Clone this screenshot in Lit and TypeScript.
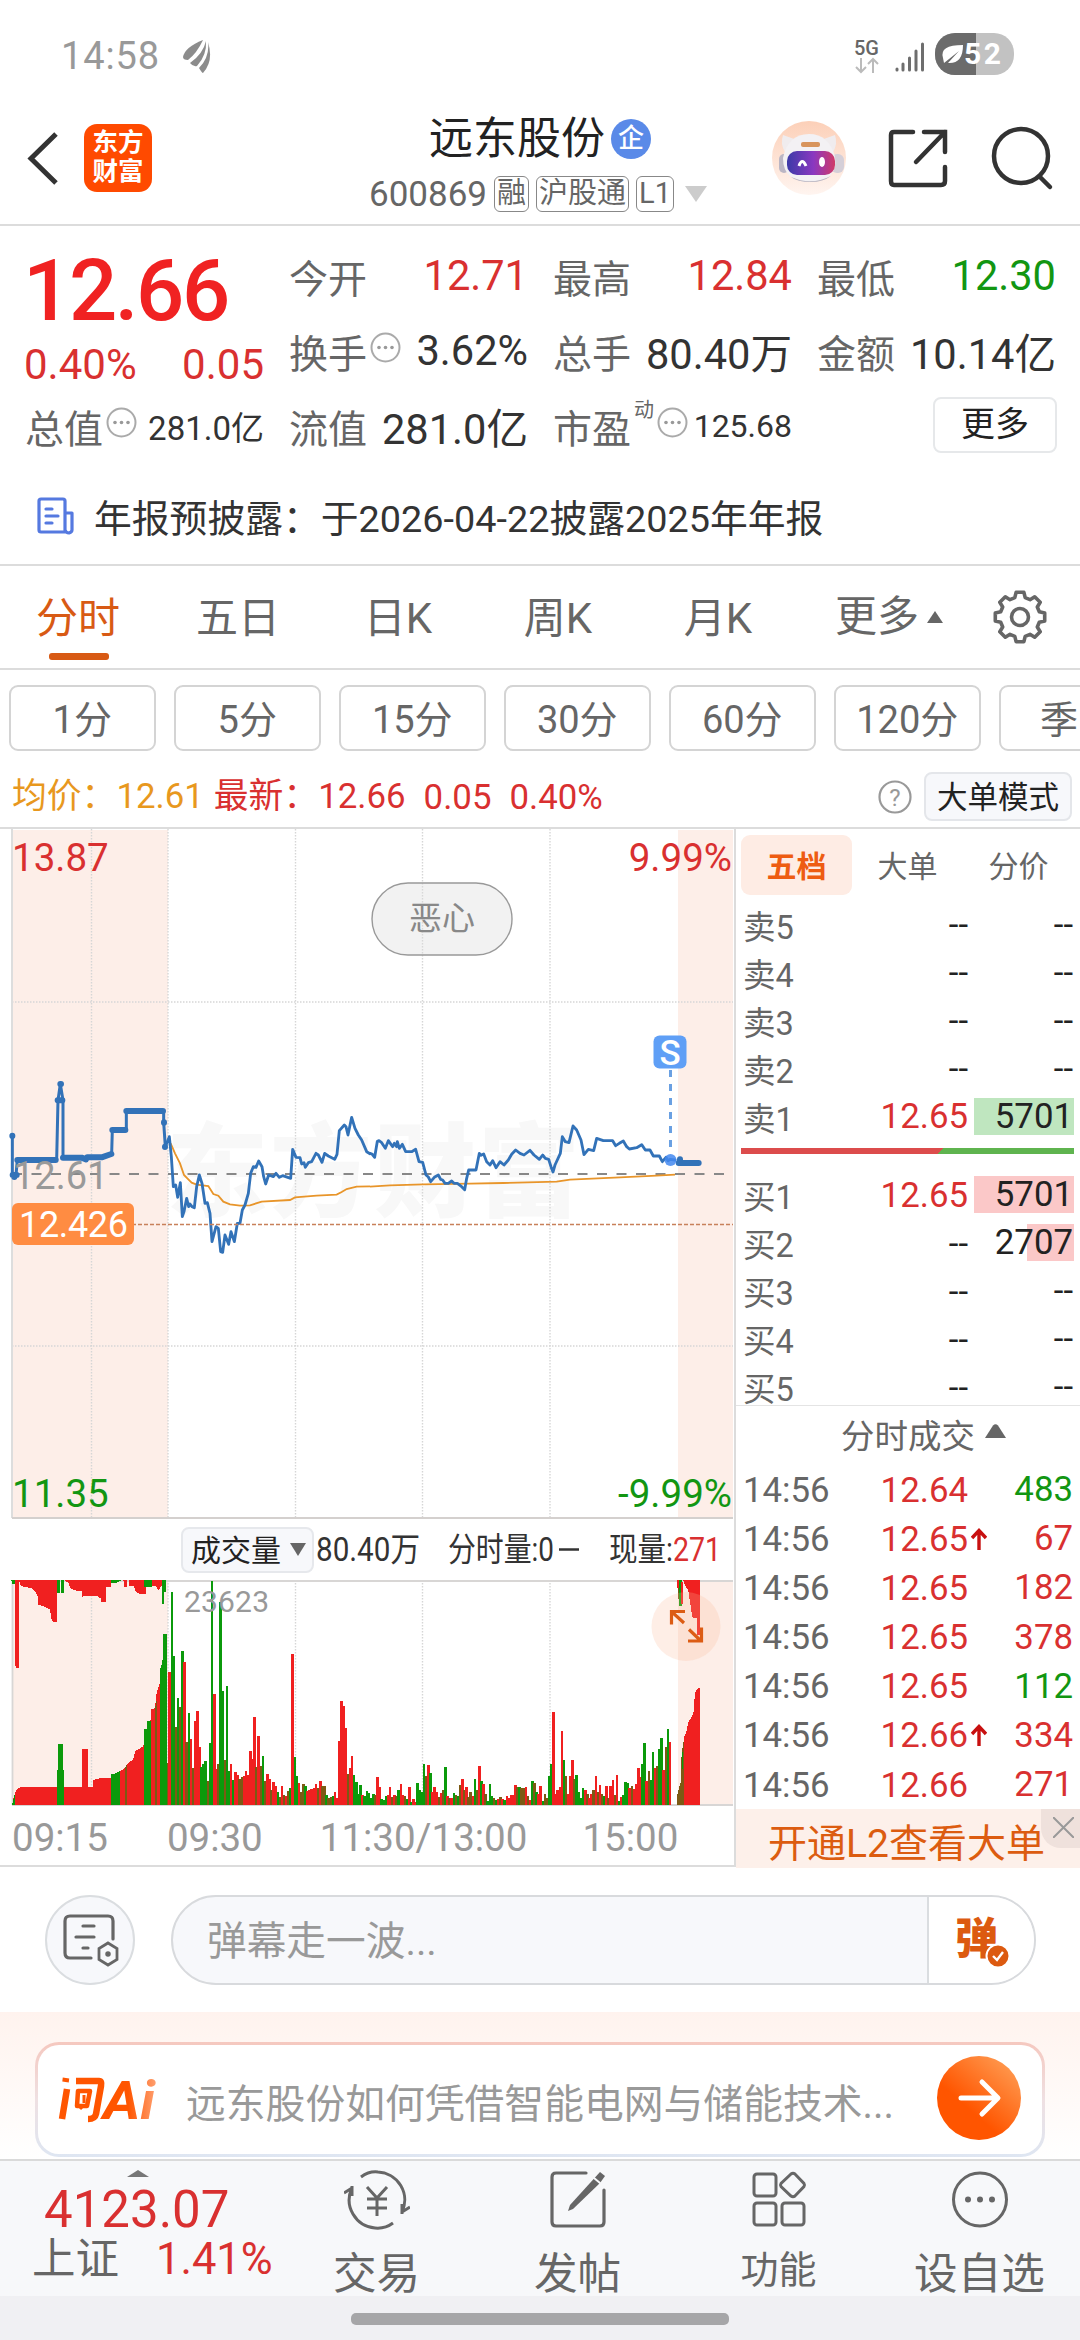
import { LitElement, html, svg, css } from 'lit';
import { customElement } from 'lit/decorators.js';

/* One entry per trading minute: distance from the top of the volume area, then colour (r, g, b = mixed). */
const VOLUME = `583b 308r 68g 262g 474b 388g 413b 247g 280r 519b 432g 510r 597b 457r 425r 534r 594g 586g 577g 636b
521g 37g 375r 600r 584b 100g 367g 572b 351g 605g 586r 632g 610r 618r 629b 625b 620r 606r 618r 546r 570r 444r 594b 500r
592b 561g 637b 614r 630r 664b 639r 650r 670g 684b 652r 677b 680r 667b 656g 255r 565g 622g 641r 670b 645b 652g 667r 664r
661r 656r 645r 656b 637r 652b 650b 677g 687b 684b 680g 669r 686r 516r 396r 411r 477r 616b 597r 561r 618g 640g 676g 649g
677r 680g 667g 672g 688g 675g 678b 625r 655r 690g 693g 682g 678r 654r 684b 677r 681b 664g 646r 678r 680b 690g 655r 698g
690r 698r 642g 664g 668g 585g 622b 588r 612g 670r 655r 670r 684b 672r 662b 595g 681r 688b 686r 671g 678b 682g 648b 630r
664b 655r 684b 670b 680r 631g 662b 591r 636g 644r 674b 695g 646g 680g 687b 692g 690r 684b 690r 694g 682r 686r 678r 678r
647r 655b 655g 657b 657b 655r 682b 694r 637g 642b 668g 676r 650r 695g 676b 688b 620g 585g 430r 676r 662r 655r 487r 572g
622b 674r 620r 573r 629b 618g 670g 686g 657g 663r 674b 686r 674r 662b 620r 670b 648r 676b 681g 650r 686b 650r 633r 678b
617r 697g 684r 677g 638g 641g 656r 651b 659r 645r 596r 624r 585g 523g 636r 607b 633g 549g 598r 591b 541g 507g 602r 535b
479g 519r`.split(/\s+/);

const PRICE_A = '496,260 508,230 514,290 520,380 527,375 533,412 541,368 547,470 552,455 560,415 566,440 570,432 576,440 583,443 590,380 598,345 606,370 615,430 622,428 630,460 636,545 648,500 655,505 662,575 668,577 675,525 686,553 693,515 703,545 712,490 720,490 727,450 735,435 745,400 752,340 760,320 768,322 776,303 786,320 791,350 797,372 806,345 820,350 828,340 838,352 848,347 872,355 878,268 888,292 900,293 905,312 912,308 916,322 925,308 935,305 948,280 955,285 966,307 974,280 985,288 1004,298 1011,283 1018,212 1033,195 1038,200 1044,225 1055,172 1065,205 1075,225 1085,240 1100,275 1110,281';
const PRICE_B = '0,400 6,402 14,412 22,364 27,362 35,368 46,385 55,362 63,373 68,380 73,370 80,380 82,365 88,385 97,373 107,395 125,395 137,388 147,425 158,427 168,465 175,471 182,485 193,472 205,465 212,478 218,480 225,490 235,490 245,483 252,490 262,490 275,500 284,509 290,475 296,450 318,450 328,400 333,406 341,402 350,425 360,435 368,422 378,443 390,425 402,435 415,420 425,403 437,390 450,400 462,405 480,391 492,405 508,418 518,405 526,415 536,418 543,440 549,456 555,435 571,400 577,350 586,365 597,368 609,318 620,330 633,360 642,404 655,388 671,392 680,355 700,362 728,362 737,377 748,370 760,363 770,380 778,387 800,383 815,374 826,390 840,390 850,408 868,408 877,425 888,412 894,422 901,418 915,420';
const AVG_A = '512,250 525,280 540,310 552,345 562,355 575,368 590,374 625,378 640,402 655,407 670,425 690,433 720,437 750,436 785,425 870,420 885,412 950,407 1010,404 1025,396 1040,387 1070,380 1110,379';
const AVG_B = '0,500 60,496 160,493 300,491 400,489 560,485 600,479 750,472 860,467 915,464';

const COLORS: Record<string, string> = { r: '#f02020', g: '#0b9a0b', b: '#7c5a14' };

@customElement('app-root')
export class AppRoot extends LitElement {
  static styles = css`
    :host { display: block; width: 1080px; height: 2340px; overflow: hidden; background: #fff; color: #333;
      font-family: Roboto, "Noto Sans CJK SC", sans-serif; }
    * { box-sizing: border-box; }
    svg { display: block; flex: none; }
    .col { display: flex; flex-direction: column; }
    .red { color: #d93030; } .green { color: #129612; }
    .status { height: 75px; display: flex; align-items: flex-end; padding: 0 66px 0 61px; color: #999; }
    .clock { font-size: 38px; line-height: 40px; letter-spacing: .9px; margin-bottom: -1px; }
    .status .leaf { margin: 0 auto 1px 22px; }
    .net { font-size: 20px; line-height: 18px; font-weight: 500; color: #666; width: 28px; margin-bottom: 1px; }
    .header { height: 151px; border-bottom: 2px solid #dcdcdc; display: flex; position: relative; }
    .back { margin: 54px 0 0 24px; }
    .brand { margin: 49px 0 0 24px; width: 68px; height: 68px; border-radius: 13px; background: #ff4a00; color: #fff;
      font-size: 25.5px; line-height: 29px; font-weight: 700; text-align: center; padding-top: 4px; flex: none; }
    .title { width: 420px; margin-left: 176px; align-items: center; padding-top: 38px; }
    .name { display: flex; align-items: center; gap: 6px; font-size: 44px; line-height: 52px; color: #222; height: 52px; margin-left: 4px;}
    .ent { width: 40px; height: 40px; border-radius: 50%; background: #5a8ae8; color: #fff; font-size: 26px; line-height: 38px;
      text-align: center; font-weight: 500; }
    .code { display: flex; align-items: center; gap: 7px; font-size: 35px; color: #666; height: 40px; margin-top: 9px; }
    .tag { border: 1.5px solid #888; border-radius: 6px; height: 36px; line-height: 33px; font-size: 29px; padding: 0 2px; }
    .h-robot { margin: 45px 0 0 23px; } .h-share { margin: 52px 0 0 40px; } .h-search { margin: 49px 0 0 41px; }
    .quote { height: 238px; padding: 12px 0 0 25px; display: grid; grid-template-columns: repeat(4, 239px); column-gap: 25px;
      grid-template-rows: repeat(3, 75px); }
    .cell { display: flex; align-items: center; justify-content: space-between; font-size: 41.6px; white-space: nowrap; }
    .cell .k { font-size: 39px; color: #666; display: flex; align-items: center; gap: 3px; height: 50px; }
    .cell .small { font-size: 33px; }
    .cell .tiny { font-size: 32px; }
    .sup { font-size: 20px; margin-top: -35px; }
    .main { grid-row: 1 / 3; }
    .big { font-size: 85px; line-height: 90px; font-weight: 500; letter-spacing: -2.4px; color: #f02222; margin: 8px 0 0 -2px; }
    .delta { display: flex; justify-content: space-between; font-size: 42px; line-height: 50px; margin: 4px 0 0 -1px; }
    .more { width: 124px; height: 56px; border: 2px solid #e6e8ea; border-radius: 8px; font-size: 34px; line-height: 50px;
      text-align: center; margin: -2px -1px 0 auto; color: #222; }
    .news { height: 102px; border-bottom: 2px solid #dcdcdc; display: flex; align-items: center; gap: 20px; padding: 7px 0 0 37px;
      font-size: 37.8px; white-space: nowrap; }
    .news span { margin-top: -4px; } .news svg { margin-top: -3px; }
    .tabs { height: 104px; border-bottom: 2px solid #dcdcdc; position: relative; display: flex; align-items: center; font-size: 42px; color: #666; }
    .tab { width: 160px; height: 100px; line-height: 104px; text-align: center; position: relative; left: -2px; }
    .tab.on { color: #d85a14; }
    .tab.on::after { content: ""; position: absolute; left: 51px; bottom: 7px; width: 60px; height: 7px; border-radius: 3px; background: #d85a14; }
    .tab.wide { width: 182px; display: flex; align-items: center; justify-content: center; gap: 8px; }
    .gear { margin-left: 10px; }
    .mins { height: 95px; padding: 15px 0 0 9px; display: flex; gap: 18.5px; overflow: hidden; }
    .min { flex: none; width: 146.5px; height: 66px; border: 2px solid #d4d4d4; border-radius: 9px; text-align: center;
      font-size: 38px; line-height: 67px; color: #666; }
    .min:last-child { width: 120px; }
    .legend { height: 64px; border-bottom: 2px solid #dcdcdc; padding: 0 8px 0 12px; display: flex; align-items: center; font-size: 34.8px; }
    .legend > span { height: 50px; line-height: 50px; display: flex; align-items: baseline; margin-top: 0; }
    .legend .avg { color: #e8981e; margin-right: 10px; }
    .legend .v { margin-left: 18px; margin-top: 1px; }
    .mode { margin-left: 12px; width: 148px; height: 49px; border: 2px solid #e4e6ea; border-radius: 8px; background: #f7f8fb;
      font-size: 30.5px; line-height: 47px; text-align: center; color: #222; white-space: nowrap; }
    .q { margin-left: auto; margin-top: 2px; }
    .body { display: flex; height: 1038px; border-bottom: 2px solid #dcdcdc; }
    .charts { width: 734px; flex: none; }
    .volhead { height: 62px; display: flex; align-items: center; padding-left: 181px; }
    .chip { width: 133px; height: 46px; border: 2px solid #e6e8ec; border-radius: 8px; background: #f7f8fb; display: flex;
      align-items: center; gap: 9px; padding: 0 0 3px 8px; font-size: 30px; color: #222; }
    .axis { height: 58px; font-size: 38.5px; color: #999; display: flex; align-items: center; padding: 3px 0 0 12px; }
    .axis span:nth-child(2) { margin-left: 59px; } .axis span:nth-child(3) { margin-left: 57px; } .axis span:nth-child(4) { margin-left: 55px; }
    .side { width: 346px; border-left: 2px solid #dcdcdc; }
    .stabs { display: flex; padding: 6px 0 0 5px; height: 71px; font-size: 30px; color: #666; flex: none; }
    .stabs div { width: 111px; height: 60px; line-height: 64px; text-align: center; border-radius: 9px; }
    .stabs .on { background: #feece4; color: #ee5c12; font-weight: 700; }
    .row { height: 48.1px; display: flex; align-items: center; padding: 0 6px 0 7px; font-size: 34.8px; color: #666; flex: none; }
    .row .l { width: 104px; } .row .l.zh { font-size: 32.5px; }
    .row .p { width: 121px; text-align: right; } .row .dash { color: #222; }
    .row .n { flex: 1; margin-left: 6px; height: 37px; line-height: 37px; text-align: right; color: #222; padding-right: 1px; margin-top: 0; }
    .row .n.g { background: #bfe6bf; } .row .n.r { background: #fbc8c8; }
    .row .n.half { background: linear-gradient(to right, transparent 53%, #fbc8c8 53%); }
    .ratio { height: 6px; margin: 8px 6px 16px 5px; background: linear-gradient(135deg, #dc4c4c 0 143px, #5fb44f 143px); flex: none; }
    .dealhead { height: 60px; margin-top: -6px; flex: none; border-top: 1.5px solid #e4e4e4; display: flex; align-items: center; justify-content: center; gap: 10px;
      font-size: 33.5px; color: #666; padding: 0 0 4px 31px; }
    .deal { height: 49.2px; } .deal .n { background: none; }
    .deal .p { display: flex; justify-content: flex-end; } .deal .p svg { margin: 9px -19px 0 3px; }
    .deal .n.up { color: #d93030; } .deal .n.dn { color: #129612; }
    .promo { flex: 1; background: #fdf0ea; color: #dc5c10; font-size: 39px; display: flex; align-items: center; padding: 3px 0 0 32px;
      position: relative; white-space: nowrap; }
    .close { position: absolute; right: 0; top: 0; width: 39px; height: 39px; background: #efe1dc; border-bottom-left-radius: 20px;
      display: flex; align-items: center; justify-content: flex-end; padding: 0 6px 2px 0; }
    .chat { height: 145px; padding: 28px 45px 0; display: flex; gap: 36px; }
    .round { width: 90px; height: 90px; border-radius: 50%; border: 2px solid #dadde0; background: #f7f8fb; display: flex;
      align-items: center; justify-content: center; flex: none; }
    .input { width: 865px; height: 90px; border: 2px solid #d8dadd; border-radius: 45px; background: #f7f8fb; display: flex; overflow: hidden;
      font-size: 39.7px; line-height: 90px; color: #999; padding-left: 34px; flex: none; }
    .send { margin-left: auto; width: 107px; border-left: 2px solid #dadde0; background: #fff; padding: 18px 0 0 26px; }
    .ai { height: 147px; padding: 30px 0 0 35px; background: linear-gradient(#fff3ee, #fffaf8 60%, #fff); }
    .aibox { width: 1010px; height: 115px; border-radius: 24px; padding: 3px; background: linear-gradient(#f5c8bf, #efe0e2 50%, #dee6f2); }
    .aiin { height: 109px; border-radius: 21px; background: #fff; display: flex; align-items: center; font-size: 39.8px; color: #999;
      padding: 0 21px 3px 20px; white-space: nowrap; }
    .aiin span { margin: 5px auto 0 26px; }
    .nav { height: 137px; border-top: 2px solid #dadada; background: #f7f8fa; display: flex; color: #666; }
    .index { width: 276px; padding: 9px 0 0 32px; flex: none; }
    .index svg { margin-left: 95px; }
    .idx { font-size: 51px; line-height: 54px; margin: 6px 0 0 12px; }
    .idr { display: flex; align-items: center; font-size: 43.5px; line-height: 50px; margin-top: -2px; gap: 37px; }
    .item { width: 201px; align-items: center; padding-top: 7px; font-size: 43.6px; line-height: 56px; }
    .item svg { height: 64px; margin-bottom: 15px; }
    .item.sm { font-size: 38px; line-height: 48px; } .item.sm svg { margin-bottom: 14px; }
    .home { height: 44px; background: #f0f0f3; padding: 17px 351px 0; }
    .home div { height: 12px; border-radius: 5px; background: #a6a6a8; }
  `;

  private dots() {
    return html`<svg width="31" height="31" viewBox="0 0 31 31" style="margin-top:-7px"><circle cx="15.5" cy="15.5" r="14" fill="none" stroke="#aaa" stroke-width="2"/>
      <g fill="#999"><circle cx="9" cy="15.5" r="1.8"/><circle cx="15.5" cy="15.5" r="1.8"/><circle cx="22" cy="15.5" r="1.8"/></g></svg>`;
  }

  private cell(k: unknown, v: string, cls = '') {
    return html`<div class="cell"><div class="k">${k}</div><span class=${cls}>${v}</span></div>`;
  }

  private statusBar() {
    return html`<div class="status">
      <div class="clock">14:58</div>
      <svg class="leaf" width="30" height="34" viewBox="0 0 30 34" fill="#8c8c8c"><path d="M21 0Q3 7 1 17Q1 20 6 20Q15 13 21 0Z"/><path d="M24 1Q21 14 8 23Q11 27 15 26Q25 15 24 1Z"/><path d="M26 2Q28 17 17 28Q20 33 21 33Q32 21 26 2Z"/></svg>
      <div class="net">5G<svg width="26" height="17" viewBox="0 0 26 17" fill="none" stroke="#bbb" stroke-width="2"><path d="M7 1V15M2 10L7 15L12 10M19 16V2M14 7L19 2L24 7"/></svg></div>
      <svg style="margin:0 10px 3px 13px" width="30" height="30" viewBox="0 0 30 30" stroke="#6e6e6e" stroke-width="3" stroke-linecap="round"><path d="M2 27V28M8 22V28M14.5 16V28M21 9V28M27.5 2V28"/></svg>
      <svg width="79" height="42" viewBox="0 0 79 42"><clipPath id="b"><rect width="79" height="42" rx="20"/></clipPath><g clip-path="url(#b)"><rect width="79" height="42" fill="#c2c2c2"/><rect width="41" height="42" fill="#6b6b6b"/></g>
        <path d="M8 25Q4 12 28 12Q28 31 13 30L24 18L9 30Z" fill="#fff"/><text x="29" y="31" font-size="30" font-weight="700" fill="#fff" textLength="37">52</text></svg>
    </div>`;
  }

  private header() {
    return html`<div class="header">
      <svg class="back" width="36" height="60" viewBox="0 0 36 60" fill="none" stroke="#333" stroke-width="5"><path d="M32 5L7 29.5L32 54"/></svg>
      <div class="brand">东方<br>财富</div>
      <div class="title col">
        <div class="name">远东股份<div class="ent">企</div></div>
        <div class="code">600869<span class="tag">融</span><span class="tag">沪股通</span><span class="tag">L1</span>
          <svg width="22" height="16" viewBox="0 0 22 16" style="margin-left:4px"><path d="M0 0H22L11 16Z" fill="#ccc"/></svg></div>
      </div>
      <svg class="h-robot" width="76" height="76" viewBox="0 0 76 76"><defs><linearGradient id="rb" x1="0" y1="0" x2="0" y2="1"><stop offset="0" stop-color="#fcd0b8"/><stop offset="1" stop-color="#fff5f0"/></linearGradient>
        <linearGradient id="vz"><stop offset="0" stop-color="#3c3aa8"/><stop offset=".55" stop-color="#8a38c0"/><stop offset="1" stop-color="#d03a68"/></linearGradient></defs>
        <circle cx="38" cy="38" r="37" fill="url(#rb)"/><path d="M12 15Q9 24 14 32L26 20ZM64 15Q67 24 62 32L50 20Z" fill="#f0ecee"/><rect x="8" y="34" width="10" height="19" rx="5" fill="#bbb6c4"/><rect x="60" y="34" width="13" height="19" rx="6" fill="#d5cfd8"/>
        <path d="M38 14Q58 14 64 37Q67 61 40 62Q12 62 12 38Q17 14 38 14Z" fill="#f3f1f4"/><path d="M20 57Q40 66 60 56Q52 62 40 62Q26 62 20 57Z" fill="#b9b4bf"/><rect x="30" y="22" width="19" height="5" rx="2" fill="#d8945c"/>
        <rect x="16" y="31" width="48" height="24" rx="10" fill="url(#vz)"/><path d="M28 46Q31 37 35 46" fill="none" stroke="#fff" stroke-width="3"/><ellipse cx="51" cy="42" rx="3" ry="5" fill="#fff"/></svg>
      <svg class="h-share" width="62" height="62" viewBox="0 0 62 62" fill="none" stroke="#333" stroke-width="4.5" stroke-linecap="round"><path d="M26 5H7Q4 5 4 8V54Q4 58 7 58H54Q58 58 58 54V40M37 5H58V25M58 5L29 35"/></svg>
      <svg class="h-search" width="64" height="68" viewBox="0 0 64 68" fill="none" stroke="#333" stroke-width="4.5" stroke-linecap="round"><circle cx="31" cy="32" r="27"/><path d="M50 53L60 63"/></svg>
    </div>`;
  }

  private quote() {
    return html`<div class="quote">
      <div class="main col"><div class="big">12.66</div><div class="delta red"><span>0.40%</span><span>0.05</span></div></div>
      ${this.cell('今开', '12.71', 'red')}${this.cell('最高', '12.84', 'red')}${this.cell('最低', '12.30', 'green')}
      ${this.cell(html`换手${this.dots()}`, '3.62%')}${this.cell('总手', '80.40万')}${this.cell('金额', '10.14亿')}
      ${this.cell(html`总值${this.dots()}`, '281.0亿', 'small')}${this.cell('流值', '281.0亿')}
      ${this.cell(html`市盈<span class="sup">动</span>${this.dots()}`, '125.68', 'tiny')}
      <div class="cell"><div class="more">更多</div></div>
    </div>
    <div class="news">
      <svg width="37" height="38" viewBox="0 0 37 38" fill="none" stroke="#5579e0" stroke-width="3.2" stroke-linejoin="round" stroke-linecap="round"><path d="M29 35H4Q2 35 2 33V4Q2 2 4 2H26Q28 2 28 4V33Q29 36 32 36Q35 35 35 33V16H29M9 12H15M9 19H21M9 26H15"/></svg>
      <span>年报预披露：于2026-04-22披露2025年年报</span></div>`;
  }

  private tabs() {
    const teeth = Array.from({ length: 8 }, (_, i) => {
      const at = (r: number, d: number) => { const a = ((i * 45 + d - 90) * Math.PI) / 180; return `${(28 + r * Math.cos(a)).toFixed(1)},${(28 + r * Math.sin(a)).toFixed(1)}`; };
      return [at(25, -9), at(25, 9), at(20, 15), at(20, 30)].join(' ');
    }).join(' ');
    return html`<div class="tabs">
      <div class="tab on">分时</div><div class="tab">五日</div><div class="tab">日K</div><div class="tab">周K</div><div class="tab">月K</div>
      <div class="tab wide">更多<svg width="16" height="12" viewBox="0 0 16 12"><path d="M0 12H16L8 0Z" fill="#666"/></svg></div>
      <svg class="gear" width="56" height="56" viewBox="0 0 56 56" fill="none" stroke="#666" stroke-width="3.6" stroke-linejoin="round"><polygon points=${teeth}/><circle cx="28" cy="28" r="8.5"/></svg>
    </div>
    <div class="mins">${['1分', '5分', '15分', '30分', '60分', '120分', '季'].map((m) => html`<div class="min">${m}</div>`)}</div>
    <div class="legend"><span class="avg">均价：12.61</span><span class="red">最新：12.66</span><span class="v red">0.05</span><span class="v red">0.40%</span>
      <svg class="q" width="34" height="34" viewBox="0 0 34 34"><circle cx="17" cy="17" r="15.5" fill="none" stroke="#999" stroke-width="2.2"/><text x="17" y="25.5" font-size="24" text-anchor="middle" fill="#999">?</text></svg>
      <div class="mode">大单模式</div></div>`;
  }

  private priceChart() {
    const cols = [91.5, 168, 295.5, 422.5, 550];
    return html`<svg width="734" height="690" viewBox="0 0 734 690">
      <rect x="12" y="1" width="156" height="688" fill="#fdeee8"/><rect x="678" y="1" width="55" height="688" fill="#fdeee8"/>
      <text x="166" y="380" font-size="102" font-weight="900" fill="#f8f8f8" textLength="414">东方财富</text>
      <g stroke="#d6d6d6" stroke-width="1.4" stroke-dasharray="1.5 1.5">${cols.map((x) => svg`<path d="M${x} 0V688"/>`)}<path d="M12 173H733M12 517H733"/></g>
      <path d="M12 0V689" stroke="#ddd" stroke-width="2"/><path d="M12 689H733" stroke="#d4d0ce" stroke-width="2"/>
      <path d="M12 345H733" stroke="#888" stroke-width="1.8" stroke-dasharray="10 9.5"/>
      <g fill="none" stroke="#e8952a" stroke-width="5.5"><g transform="translate(0 231) scale(.33333)"><polyline points=${AVG_A}/></g><g transform="translate(370 191) scale(.33333)"><polyline points=${AVG_B}/></g></g>
      <g fill="none" stroke="#3272b8" stroke-width="8.5" stroke-linejoin="round" stroke-linecap="round">
        <g transform="translate(0 231) scale(.33333)"><polyline points=${PRICE_A}/>
          <path stroke-width="9" d="M37 227V345H48L52 300H170L174 121L181 72L189 121V293H245L258 298L262 293H310L335 280L337 210H379V153H491V187L496 260"/>
          <path stroke-width="18" d="M37 227V228M38 345H50M43 350V351M52 300H167M173 121H187M181 72H183M189 293H245L258 298M262 292H305L334 282M337 210H376M379 153H489M492 187V188M495 260V261"/></g>
        <g transform="translate(370 191) scale(.33333)"><polyline points=${PRICE_B}/><path stroke-width="18" d="M926 429H986M930 418V425"/></g>
      </g>
      <path d="M670.5 241V324" stroke="#6aa0e2" stroke-width="3" stroke-dasharray="7 7"/><circle cx="670.5" cy="331" r="6" fill="#4388f0" opacity=".85"/>
      <rect x="653.5" y="206.500" width="33" height="33" rx="6" fill="#5f9ff6"/><text x="670" y="235.500" font-size="35" font-weight="500" fill="#fff" text-anchor="middle">S</text>
      <path d="M12 395.500H733" stroke="#c8805a" stroke-width="1.4" stroke-dasharray="4 2"/>
      <rect x="12" y="374" width="122" height="42" rx="6" fill="#ff8c42"/><text x="19" y="407.500" font-size="36" fill="#fff" textLength="109">12.426</text>
      <text x="13" y="360" font-size="38" fill="#999">12.61</text>
      <g font-size="38.5"><text x="12" y="42" fill="#d93030">13.87</text><text x="732" y="42" text-anchor="end" fill="#d93030">9.99%</text>
        <text x="12" y="677.500" fill="#129612">11.35</text><text x="732" y="677.500" text-anchor="end" fill="#129612">-9.99%</text></g>
      <rect x="372" y="54" width="140" height="72" rx="36" fill="#dcdcdc" fill-opacity=".36" stroke="#999" stroke-width="1.4"/>
      <text x="442" y="101" font-size="33" text-anchor="middle" fill="#888">恶心</text>
    </svg>`;
  }

  private volumeChart() {
    const rect = (x: number, y: number, w: number, y2: number, c: string) => svg`<rect x=${x} y=${y} width=${w} height=${y2 - y} fill=${COLORS[c]}/>`;
    return html`<svg width="734" height="227" viewBox="0 0 734 227">
      <rect x="12" y="1" width="156" height="224" fill="#fdeee8"/><rect x="678" y="1" width="55" height="224" fill="#fdeee8"/>
      <g stroke="#d6d6d6" stroke-width="1.4" stroke-dasharray="1.5 1.500">${[91.5, 168, 295.5, 422.5, 550].map((x) => svg`<path d="M${x} 0V225"/>`)}</g>
      <path d="M12 1H733M12 225H733M12.500 0V225" stroke="#d8d6d5" stroke-width="1.800" fill="none"/>
      <g transform="translate(0 -11) scale(.33333)" shape-rendering="crispEdges">
        ${VOLUME.map((v, i) => rect(499 + i * 6.36, parseInt(v), 7.6, 708, v.slice(-1)))}
        <g fill="#f02020"><path d="M38 708V695L45 672L52 660L65 653L90 655H280V633L300 628L332 627V617L350 612L372 600L380 587L400 570L405 547L430 532L436 500L452 453V422L465 418L470 370L480 340V708Z"/>
          <path d="M45 34H57V297H49L45 285ZM57 34H171V160H160L154 148L150 122L130 112L114 107V82L105 68L95 57L70 54L62 48ZM193 34H333V54H317V100H304L302 88L290 80H262L246 83V66L222 64L212 58L205 42ZM370 34H381V53H373ZM387 34H438V74H418L405 66L402 50H387ZM455 34H486V50L475 63L466 50H455Z"/>
          <path d="M245 541H263V708H245Z"/></g>
        <g fill="#0b9a0b"><path d="M332 708V617L350 612L360 606V708ZM432 708V480H442V455H452V708ZM480 708V300L486 285L490 255V195H500V708ZM170 708V603H174V526H189V603H191V708Z"/>
          <path d="M34 33H45V46H38ZM170 34H179V71H170ZM182 34H191V71H182ZM333 34H365L350 41H333ZM432 34H455V54H432ZM485 34H499V68H493V105H485ZM36 707L44 675V708Z"/></g>
        <g fill="#7c5a14"><path d="M374 708V598L380 587V708ZM465 708V418L470 395V708Z"/></g>
        <g transform="translate(1110 0)"><path fill="#7c5a14" d="M921 708V680L932 640L935 550L943 505V708ZM924 34H930V105H926Z"/><path fill="#0b9a0b" d="M926 34H936V110H926ZM936 550H940V600H936Z"/>
          <path fill="#f02020" d="M942 708V505L950 485L955 460L970 435L975 370L984 357H990V708ZM921 34H926V58H921ZM932 40H940V105H934ZM940 34H990V198H981V148H968L964 125L955 65L945 50Z"/></g>
      </g>
      <text x="184" y="32" font-size="30" fill="#999" textLength="85">23623</text>
      <circle cx="686" cy="46.500" r="34.500" fill="#fbb898" fill-opacity=".24"/>
      <g fill="none" stroke="#dc5c14" stroke-width="3.200"><path d="M671.500 44.500V31.500H685M672 32L684 43M688 61H701.500V47.500M689 49.500L701 61"/></g>
    </svg>`;
  }

  private charts() {
    return html`<div class="charts col">
      ${this.priceChart()}
      <div class="volhead"><div class="chip">成交量<svg width="16" height="13" viewBox="0 0 16 13" style="margin-top:2px"><path d="M0 0H16L8 13Z" fill="#666"/></svg></div>
        <svg width="420" height="46" viewBox="0 0 420 46" font-size="33" fill="#333"><g>
          <text x="2" y="34" textLength="104" lengthAdjust="spacingAndGlyphs">80.40万</text>
          <text x="134" y="34" textLength="106" lengthAdjust="spacingAndGlyphs">分时量:0</text><path d="M245 22.500H265" stroke="#333" stroke-width="2.500"/>
          <text x="295" y="34" textLength="112" lengthAdjust="spacingAndGlyphs">现量:<tspan fill="#d93030">271</tspan></text></g></svg></div>
      ${this.volumeChart()}
      <div class="axis"><span>09:15</span><span>09:30</span><span>11:30/13:00</span><span>15:00</span></div>
    </div>`;
  }

  private book(l: string, p: string, n: string, bg = '') {
    return html`<div class="row"><span class="l zh">${l}</span><span class="p ${p === '--' ? 'dash' : 'red'}">${p}</span><span class="n ${bg}">${n}</span></div>`;
  }

  private deal(p: string, n: string, dir: string, arrow = false) {
    return html`<div class="row deal"><span class="l">14:56</span><span class="p red">${p}${arrow ? html`<svg width="16" height="22" viewBox="0 0 16 22" fill="none" stroke="#c81010" stroke-width="3.4"><path d="M8 22V3M1 10L8 2.500L15 10"/></svg>` : ''}</span><span class="n ${dir}">${n}</span></div>`;
  }

  private side() {
    return html`<div class="side col">
      <div class="stabs"><div class="on">五档</div><div>大单</div><div>分价</div></div>
      ${[5, 4, 3, 2].map((i) => this.book(`卖${i}`, '--', '--'))}${this.book('卖1', '12.65', '5701', 'g')}
      <div class="ratio"></div>
      ${this.book('买1', '12.65', '5701', 'r')}${this.book('买2', '--', '2707', 'half')}${[3, 4, 5].map((i) => this.book(`买${i}`, '--', '--'))}
      <div class="dealhead">分时成交<svg width="21" height="14" viewBox="0 0 21 14" style="margin-top:-4px"><path d="M0 14H21L13 1.500Q10.500 -1 8 1.500Z" fill="#666"/></svg></div>
      ${this.deal('12.64', '483', 'dn')}${this.deal('12.65', '67', 'up', true)}${this.deal('12.65', '182', 'up')}${this.deal('12.65', '378', 'up')}
      ${this.deal('12.65', '112', 'dn')}${this.deal('12.66', '334', 'up', true)}${this.deal('12.66', '271', 'up')}
      <div class="promo">开通L2查看大单<div class="close"><svg width="21" height="21" viewBox="0 0 21 21" stroke="#999" stroke-width="2"><path d="M0 0L21 21M21 0L0 21"/></svg></div></div>
    </div>`;
  }

  private footer() {
    return html`<div class="chat">
      <div class="round"><svg width="58" height="54" viewBox="0 0 58 54" fill="none" stroke="#666" stroke-width="3.2" stroke-linecap="round"><path d="M30 45H9Q4 45 4 40V8Q4 3 9 3H47Q52 3 52 8V26M22 13H33M15 24H33M22 35H27"/><path d="M47 30L56 35.500V46.500L47 52L38 46.500V35.500Z" stroke-width="2.800"/><circle cx="47" cy="41" r="2" fill="#666" stroke-width="1.500"/></svg></div>
      <div class="input">弹幕走一波...<div class="send"><svg width="58" height="54" viewBox="0 0 58 54"><text x="0" y="39" font-size="43" font-weight="900" fill="#dc5a10">弹</text><circle cx="43" cy="41" r="11.500" fill="#dc5a10" stroke="#fff" stroke-width="2"/><path d="M38 41L42 45L48 37" fill="none" stroke="#fff" stroke-width="2.400"/></svg></div></div>
    </div>
    <div class="ai"><div class="aibox"><div class="aiin">
      <svg width="102" height="60" viewBox="0 -5 102 60"><defs><linearGradient id="lg"><stop offset=".5" stop-color="#ff5500"/><stop offset="1" stop-color="#ffa070"/></linearGradient></defs>
        <g fill="none" stroke="#ff5500" stroke-width="6.500" stroke-linejoin="round"><path d="M9 16L4 46M8 5L7.500 9"/><path d="M18 8H41Q44 8 43 13L38 41Q37 46 30 46"/><path d="M20 18H32L29 33H19Z" stroke-width="4.500"/><path d="M26 22V30M22 36L26 32" stroke-width="3"/></g>
        <g font-size="54" font-weight="700" font-style="italic" fill="url(#lg)"><text x="45" y="46" textLength="52" lengthAdjust="spacingAndGlyphs">Ai</text></g></svg>
      <span>远东股份如何凭借智能电网与储能技术...</span>
      <svg width="84" height="84" viewBox="0 0 84 84"><defs><linearGradient id="go" x1=".2" y1=".9" x2=".9" y2=".1"><stop offset=".3" stop-color="#ff5500"/><stop offset="1" stop-color="#ff9a50"/></linearGradient></defs><circle cx="42" cy="42" r="42" fill="url(#go)"/><path d="M24 42H60M45 26L61 42L45 58" fill="none" stroke="#fff" stroke-width="5" stroke-linecap="round" stroke-linejoin="round"/></svg>
    </div></div></div>
    <div class="nav">
      <div class="index"><svg width="22" height="7" viewBox="0 0 22 7"><path d="M0 7H22L11 0Z" fill="#777"/></svg>
        <div class="idx red">4123.07</div><div class="idr"><span>上证</span><span class="red">1.41%</span></div></div>
      <div class="item col"><svg width="66" height="64" viewBox="0 0 66 64" fill="none" stroke="#666" stroke-width="3"><path d="M17 9Q25 3 34 4A28 28 0 0 1 58 44L66 39M58 46V36M49 55Q41 61 31 60A28 28 0 0 1 8 20L0 25M8 18V28" stroke-linejoin="round"/><path d="M23 19L33 30L43 19M33 30V48M23 31H43M23 40H43"/></svg>交易</div>
      <div class="item col"><svg width="60" height="64" viewBox="0 0 60 64" fill="none" stroke="#666" stroke-width="3.200" stroke-linecap="round"><path d="M38 5H8Q4 5 4 9V54Q4 58 8 58H52Q56 58 56 54V22"/><path d="M52 4L57 8L52 15L25 41L20 43L22 37Z" fill="#666" stroke="none"/><path d="M46 10L52 15" stroke="#f7f8fa" stroke-width="2"/></svg>发帖</div>
      <div class="item sm col"><svg width="56" height="64" viewBox="0 0 56 64" fill="none" stroke="#666" stroke-width="3"><rect x="3" y="6" width="22" height="22" rx="3"/><rect x="3" y="35" width="22" height="22" rx="3"/><rect x="31" y="35" width="22" height="22" rx="3"/><path d="M40 6L30 15.500Q29 17 30 18.500L40 28Q42 29.500 44 28L53 18.500Q54 17 53 15.500L44 6Q42 4.500 40 6Z"/></svg>功能</div>
      <div class="item col"><svg width="60" height="64" viewBox="0 0 60 64"><circle cx="30" cy="31.500" r="26.500" fill="none" stroke="#666" stroke-width="3"/><g fill="#666"><circle cx="18" cy="31.500" r="3"/><circle cx="30" cy="31.500" r="3"/><circle cx="42" cy="31.500" r="3"/></g></svg>设自选</div>
    </div>
    <div class="home"><div></div></div>`;
  }

  render() {
    return html`${this.statusBar()}${this.header()}${this.quote()}${this.tabs()}<div class="body">${this.charts()}${this.side()}</div>${this.footer()}`;
  }
}
